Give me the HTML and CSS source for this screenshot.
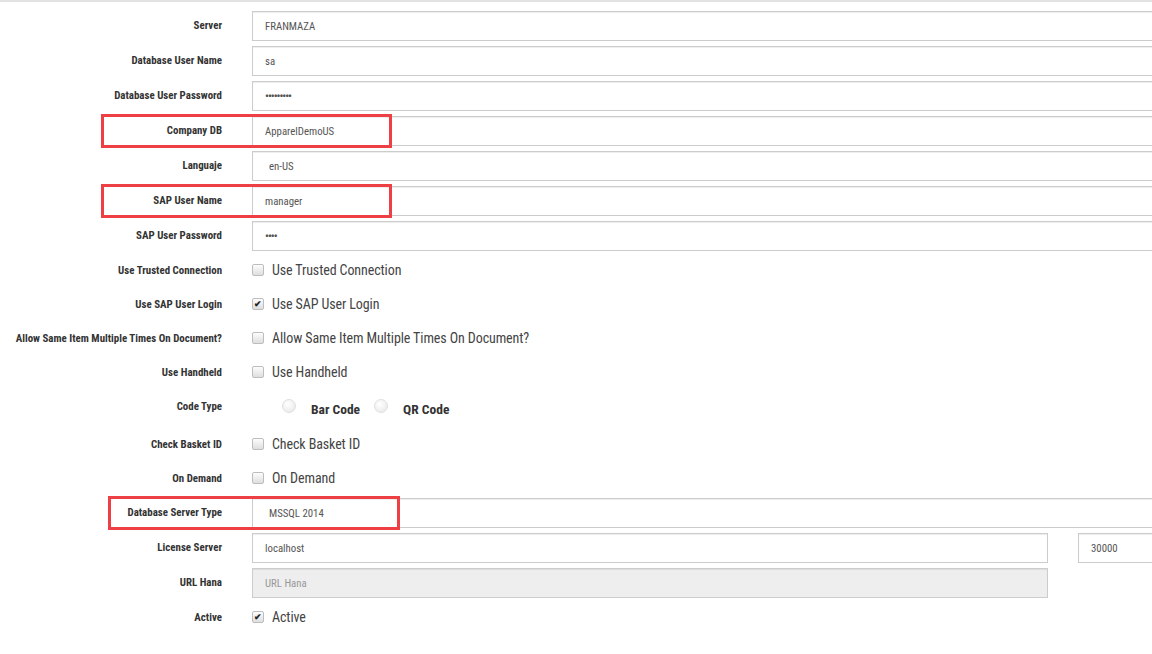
FILE: index.html
```html
<!DOCTYPE html>
<html lang="en">
<head>
    <meta charset="UTF-8">
    <meta name="viewport" content="width=device-width, initial-scale=1.0">
    <title>Company Settings</title>
    <link rel="stylesheet" href="styles.css">
</head>
<body>
    <form class="settings">
        <div class="row">
            <label class="control-label">Server</label>
            <input class="form-control" type="text" value="FRANMAZA">
        </div>
        <div class="row">
            <label class="control-label">Database User Name</label>
            <input class="form-control" type="text" value="sa">
        </div>
        <div class="row">
            <label class="control-label">Database User Password</label>
            <input class="form-control pass" type="text" value="•••••••••">
        </div>
        <div class="row">
            <span class="mark mark-a"></span>
            <label class="control-label">Company DB</label>
            <input class="form-control" type="text" value="ApparelDemoUS">
        </div>
        <div class="row">
            <label class="control-label">Languaje</label>
            <input class="form-control shifted" type="text" value="en-US">
        </div>
        <div class="row">
            <span class="mark mark-a"></span>
            <label class="control-label">SAP User Name</label>
            <input class="form-control" type="text" value="manager">
        </div>
        <div class="row">
            <label class="control-label">SAP User Password</label>
            <input class="form-control pass" type="text" value="••••">
        </div>

        <div class="row check-row">
            <label class="control-label">Use Trusted Connection</label>
            <span class="checkbox"><span class="box"></span>Use Trusted Connection</span>
        </div>
        <div class="row check-row">
            <label class="control-label">Use SAP User Login</label>
            <span class="checkbox"><span class="box checked">&#10004;</span>Use SAP User Login</span>
        </div>
        <div class="row check-row">
            <label class="control-label">Allow Same Item Multiple Times On Document?</label>
            <span class="checkbox"><span class="box"></span>Allow Same Item Multiple Times On Document?</span>
        </div>
        <div class="row check-row">
            <label class="control-label">Use Handheld</label>
            <span class="checkbox"><span class="box"></span>Use Handheld</span>
        </div>
        <div class="row check-row radio-row">
            <label class="control-label">Code Type</label>
            <span class="radios">
                <span class="radio"></span><b>Bar Code</b>
                <span class="radio"></span><b>QR Code</b>
            </span>
        </div>
        <div class="row check-row">
            <label class="control-label">Check Basket ID</label>
            <span class="checkbox"><span class="box"></span>Check Basket ID</span>
        </div>
        <div class="row check-row">
            <label class="control-label">On Demand</label>
            <span class="checkbox"><span class="box"></span>On Demand</span>
        </div>

        <div class="row">
            <span class="mark mark-b"></span>
            <label class="control-label">Database Server Type</label>
            <input class="form-control shifted" type="text" value="MSSQL 2014">
        </div>
        <div class="row">
            <label class="control-label">License Server</label>
            <input class="form-control short" type="text" value="localhost">
            <input class="form-control port" type="text" value="30000">
        </div>
        <div class="row">
            <label class="control-label">URL Hana</label>
            <input class="form-control short" type="text" placeholder="URL Hana" disabled>
        </div>
        <div class="row check-row">
            <label class="control-label">Active</label>
            <span class="checkbox"><span class="box checked">&#10004;</span>Active</span>
        </div>
    </form>
</body>
</html>
```

FILE: styles.css
```css
html, body {
    margin: 0;
    padding: 0;
    background-color: #fff;
    overflow: hidden;
}
body {
    font-family: "Roboto Condensed", "Liberation Sans Narrow", Roboto, "Liberation Sans", sans-serif;
    color: #333;
}
.settings {
    border-top: 2px solid #e2e2e2;
    padding-top: 9px;
    width: 1200px;
}
.row {
    position: relative;
    display: flex;
    align-items: flex-start;
    height: 30px;
    margin-bottom: 5px;
}
.control-label {
    width: 222px;
    padding-top: 8px;
    margin-right: 30px;
    text-align: right;
    font-size: 10.9px;
    font-weight: bold;
    color: #333;
    white-space: nowrap;
}
.form-control {
    box-sizing: border-box;
    width: 920px;
    height: 30px;
    padding: 0 12px;
    border: 1px solid #ccc;
    border-radius: 0;
    box-shadow: inset 0 1px 1px rgba(0, 0, 0, 0.075);
    font-family: inherit;
    font-size: 10.8px;
    color: #555;
    background-color: #fff;
}
.form-control.shifted {
    padding-left: 16px;
}
.form-control.pass {
    letter-spacing: -1px;
    font-weight: bold;
}
.form-control.short {
    width: 796px;
}
.form-control.port {
    width: 120px;
    margin-left: 30px;
}
.form-control:disabled {
    background-color: #eee;
}
.form-control::placeholder {
    color: #999;
}

/* checkbox rows */
.check-row {
    align-items: center;
    height: 28px;
    margin-bottom: 6px;
}
.check-row .control-label {
    padding-top: 0;
}
.radio-row {
    margin-bottom: 10px;
}
.checkbox {
    display: flex;
    align-items: center;
    font-size: 14px;
    color: #444;
    letter-spacing: -0.1px;
}
.box {
    box-sizing: border-box;
    width: 12px;
    height: 12px;
    margin-right: 8px;
    border: 1px solid #bdbdbd;
    border-radius: 2px;
    background: linear-gradient(#fdfdfd, #dedede);
    font-size: 9px;
    font-weight: bold;
    line-height: 10px;
    text-align: center;
    letter-spacing: 0;
    color: #222;
}
.radios {
    display: flex;
    align-items: center;
    padding-left: 30px;
    padding-top: 6px;
    font-size: 13.5px;
    color: #333;
}
.radios b {
    margin-right: 14px;
}
.radio {
    box-sizing: border-box;
    width: 14px;
    height: 14px;
    margin: -7px 15px 0 0;
    border: 1px solid #e0e0e0;
    border-radius: 50%;
    background: radial-gradient(circle at 40% 35%, #fff, #e6e6e6);
}

/* red annotation frames */
.mark {
    position: absolute;
    box-sizing: border-box;
    height: 34px;
    top: -2px;
    border: 3px solid #ee3f45;
}
.mark-a {
    left: 101px;
    width: 291px;
}
.mark-b {
    left: 108px;
    width: 292px;
}
```
